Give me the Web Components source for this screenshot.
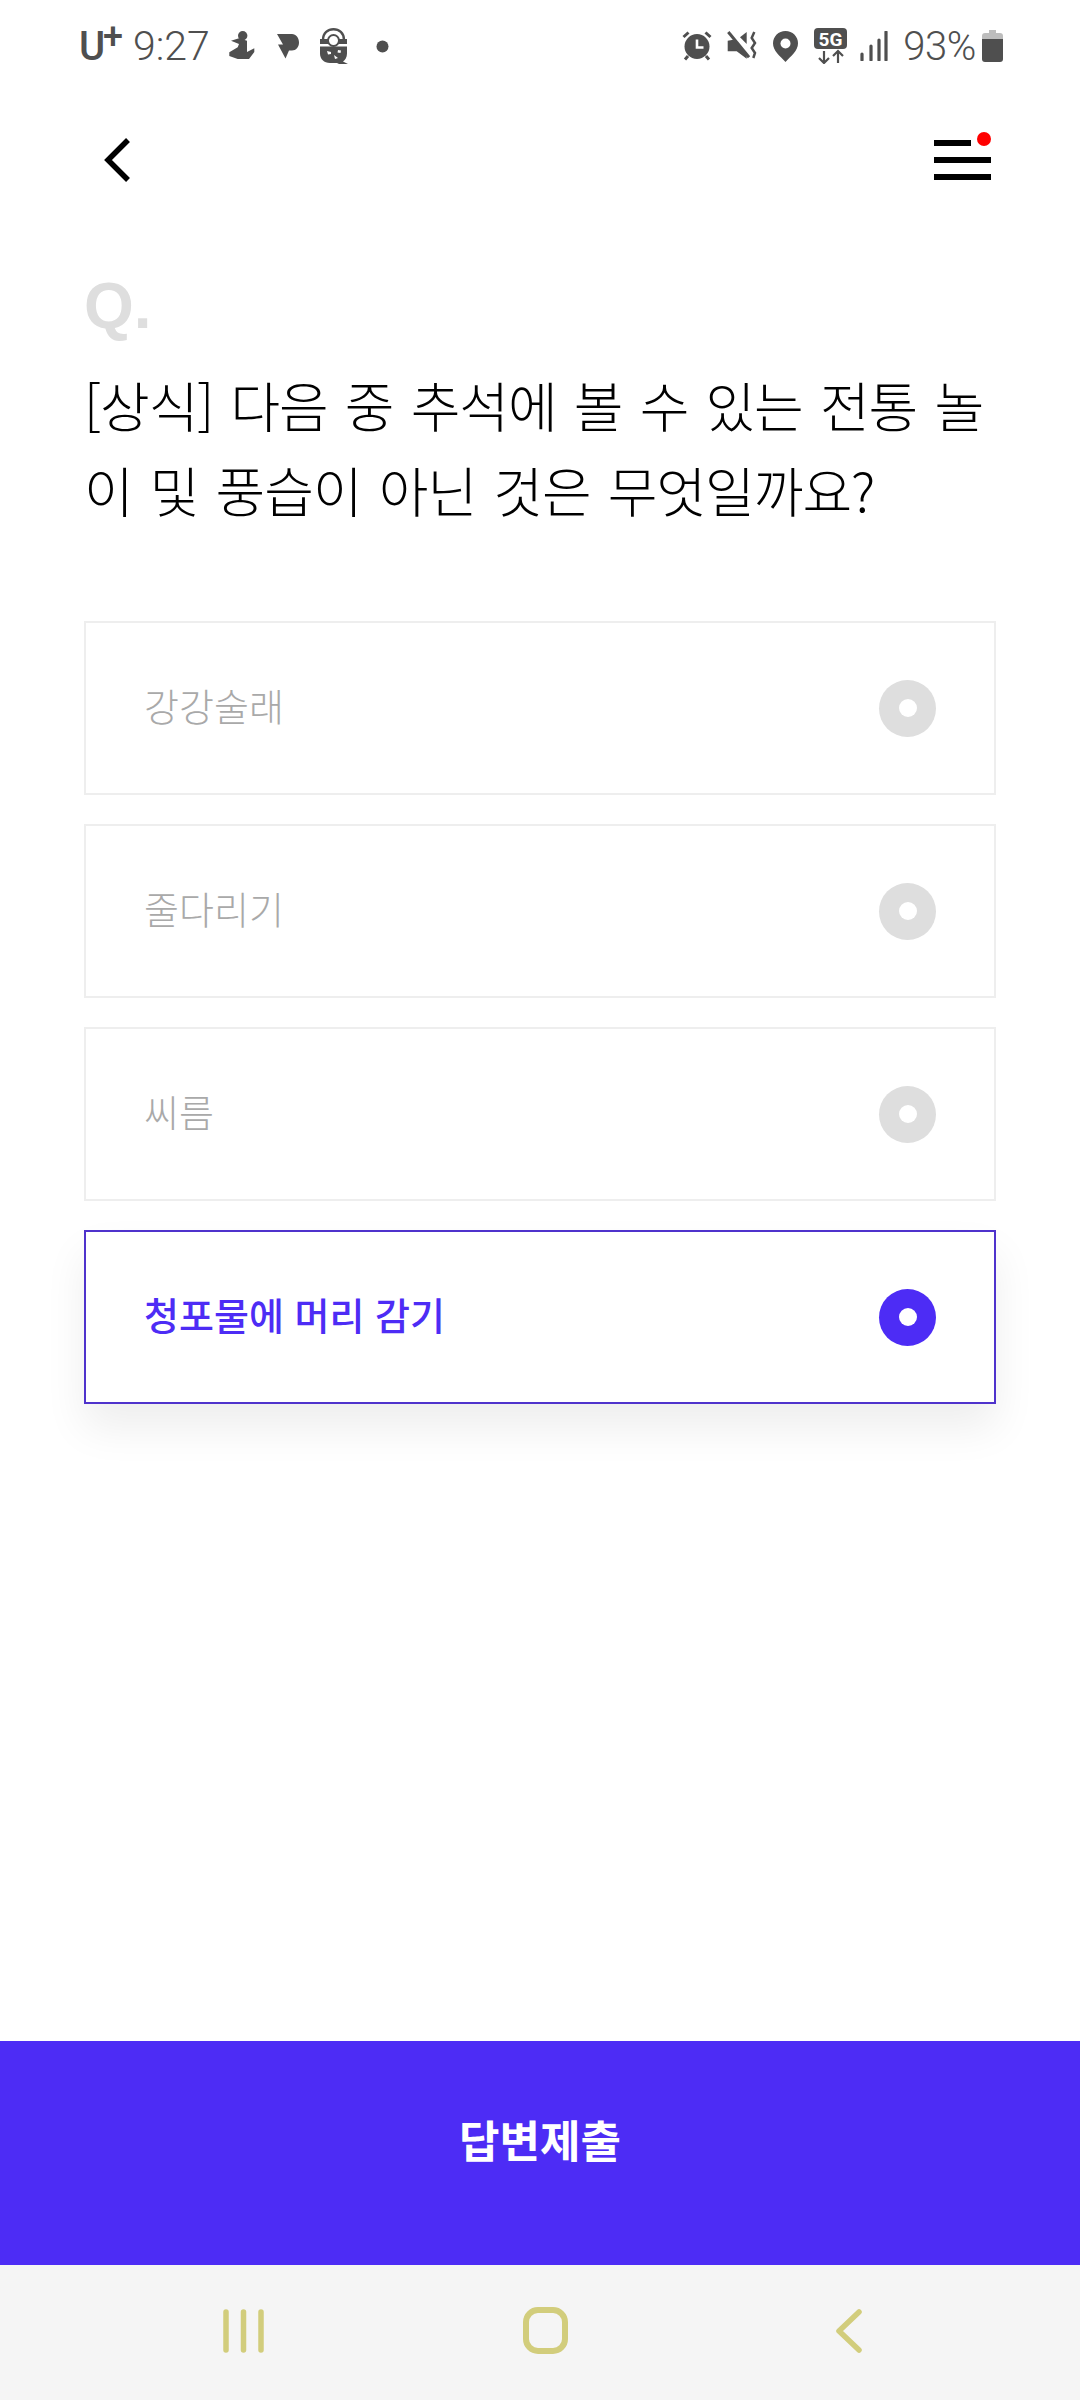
<!DOCTYPE html>
<html lang="ko">
<head>
<meta charset="utf-8">
<title>퀴즈</title>
<style>
  html, body { margin: 0; padding: 0; background: #fff; }
  body { font-family: "Noto Sans CJK KR", "Noto Sans", sans-serif; }
  quiz-app { width: 1080px; height: 2400px; }
</style>
</head>
<body>
<quiz-app>
  <status-bar slot="status"></status-bar>
  <top-bar slot="top"></top-bar>
  <quiz-question slot="question">[상식] 다음 중 추석에 볼 수 있는 전통 놀이 및 풍습이 아닌 것은 무엇일까요?</quiz-question>
  <answer-option slot="answers">강강술래</answer-option>
  <answer-option slot="answers">줄다리기</answer-option>
  <answer-option slot="answers">씨름</answer-option>
  <answer-option slot="answers" selected>청포물에 머리 감기</answer-option>
  <submit-button slot="submit">답변제출</submit-button>
  <nav-bar slot="nav"></nav-bar>
</quiz-app>

<script>
class QuizApp extends HTMLElement {
  constructor() {
    super();
    this.attachShadow({ mode: 'open' });
    this.shadowRoot.innerHTML = `
      <style>
        :host { display: flex; flex-direction: column; background: #fff; }
        .answers { display: flex; flex-direction: column; gap: 29px; padding: 0 84px; margin-top: 89px; }
        .spacer { flex: 1; }
      </style>
      <slot name="status"></slot>
      <slot name="top"></slot>
      <slot name="question"></slot>
      <div class="answers"><slot name="answers"></slot></div>
      <div class="spacer"></div>
      <slot name="submit"></slot>
      <slot name="nav"></slot>`;
  }
}

class StatusBar extends HTMLElement {
  constructor() {
    super();
    this.attachShadow({ mode: 'open' });
    this.shadowRoot.innerHTML = `
      <style>
        :host { display: flex; align-items: center; box-sizing: border-box; height: 90px; padding: 2px 77px 0 79px; color: #4f4f4f; font-family: Roboto, "Liberation Sans", sans-serif; }
        svg { display: block; flex: none; fill: #4f4f4f; }
        .carrier { font-size: 40px; font-weight: 500; line-height: 1; position: relative; width: 41px; margin-top: 2px; }
        .carrier i { position: absolute; left: 24px; top: -8px; font-style: normal; font-size: 36px; }
        .time { font-size: 41px; font-weight: 300; margin-left: 13px; }
        .pct { font-size: 40px; font-weight: 300; margin-left: 15px; letter-spacing: -.4px; }
        .gap { flex: 1; }
      </style>
      <span class="carrier">U<i>+</i></span>
      <span class="time">9:27</span>
      <svg style="margin-left:19px" width="26" height="30" viewBox="0 0 26 30">
        <circle cx="13.700" cy="4.700" r="4.700"/>
        <path d="M2 9.700L10 7.300l8 2.400V21l7.300-3.700V21L20 28H8.700L.3 25v-3.700L8.700 16.300 10 13z"/>
      </svg>
      <svg style="margin-left:22px" width="22" height="25" viewBox="0 0 22 25">
        <path d="M0 0H15C19 0 22 4 22 8.500S19 16.500 15 16.500H12L8.500 24.500 1 10.500H6L0 0z"/>
      </svg>
      <svg style="margin-left:20px" width="29" height="36" viewBox="0 0 29 36">
        <path d="M4 12C4 5 9 1.200 14.500 1.200S25 5 25 12" fill="none" stroke="#4f4f4f" stroke-width="2.400"/>
        <path d="M1 11h27v5H1z"/>
        <circle cx="14.500" cy="12.500" r="5.500" fill="#fff" stroke="#4f4f4f" stroke-width="2"/>
        <path d="M1 18.500h27v7c0 4-2 6.500-4 8l5 2.500h-9l-2-1h-7C5 35 1 31 1 25.500z"/>
        <path d="M8 23l4 1v2l-3 .5zM19 22l3 .5-.5 2.500-3-.5zM15 27l4 3-3 1z" fill="#fff"/>
      </svg>
      <svg style="margin-left:28px" width="13" height="13" viewBox="0 0 13 13"><circle cx="6.500" cy="6.500" r="6"/></svg>
      <div class="gap"></div>
      <svg width="30" height="30" viewBox="0 0 30 30">
        <circle cx="15" cy="15.500" r="12.500"/>
        <path d="M15 8.500v8h6.500" fill="none" stroke="#fff" stroke-width="2.600"/>
        <path d="M1.500 6l5-4.500M28.500 6l-5-4.500M6 25l-3 3.500M24 25l3 3.500" stroke="#4f4f4f" stroke-width="3" fill="none"/>
      </svg>
      <svg style="margin-left:15px" width="31" height="30" viewBox="0 0 31 30">
        <path d="M13 6.300L19.700 1V13z"/>
        <path d="M.7 9.700L6.300 8.700 19.700 22v5.700L9.700 20.300H.7z"/>
        <path d="M1.300 1L22 26.300" stroke="#4f4f4f" stroke-width="3"/>
        <path d="M27.300 1L24.700 7 28 12 24.700 17 28 22 26.300 27" fill="none" stroke="#4f4f4f" stroke-width="2.500"/>
      </svg>
      <svg style="margin-left:15px" width="25" height="31" viewBox="0 0 25 31">
        <path d="M12.500 0C5.500 0 0 5.500 0 12.300 0 20 7 25 12.500 31 18 25 25 20 25 12.300 25 5.500 19.500 0 12.500 0z"/>
        <circle cx="12.500" cy="12.500" r="5" fill="#fff"/>
      </svg>
      <svg style="margin-left:16px" width="34" height="36" viewBox="0 0 34 36">
        <rect x="0" y="0" width="33" height="21" rx="4"/>
        <text x="16.500" y="18" text-anchor="middle" font-family="Roboto, 'Liberation Sans', sans-serif" font-weight="700" font-size="19" fill="#fff">5G</text>
        <path d="M10 23v12M5 30l5 5 5-5M24 35V23M19 28l5-5 5 5" fill="none" stroke="#4f4f4f" stroke-width="2.200"/>
      </svg>
      <svg style="margin-left:12px" width="28" height="30" viewBox="0 0 28 30">
        <path d="M2 23v6M11 15v14M19 9v20M26 1v28" stroke="#4f4f4f" stroke-width="3.200" stroke-linecap="round" fill="none"/>
      </svg>
      <span class="pct">93%</span>
      <svg style="margin-left:6px" width="21" height="32" viewBox="0 0 21 32">
        <path d="M7 0h7v3h4c2 0 3 1 3 3v3H0V6c0-2 1-3 3-3h4z" fill="#bdbdbd"/>
        <path d="M0 9h21v20c0 2-1 3-3 3H3c-2 0-3-1-3-3z"/>
      </svg>`;
  }
}

class TopBar extends HTMLElement {
  constructor() {
    super();
    this.attachShadow({ mode: 'open' });
    this.shadowRoot.innerHTML = `
      <style>
        :host { display: flex; justify-content: space-between; align-items: center; box-sizing: border-box; height: 115px; padding: 16px 89px 0 104px; }
        svg { display: block; }
      </style>
      <svg style="margin-top:9px" width="26" height="44" viewBox="0 0 26 44">
        <path d="M24 2L4 22l20 20" fill="none" stroke="#000" stroke-width="5.500"/>
      </svg>
      <svg width="57" height="48" viewBox="0 0 57 48">
        <rect x="0" y="8" width="37" height="6"/>
        <rect x="0" y="25" width="57" height="6"/>
        <rect x="0" y="42" width="57" height="6"/>
        <circle cx="50" cy="7" r="7" fill="#f00"/>
      </svg>`;
  }
}

class QuizQuestion extends HTMLElement {
  constructor() {
    super();
    this.attachShadow({ mode: 'open' });
    this.shadowRoot.innerHTML = `
      <style>
        :host { display: block; padding: 0 84px; margin-top: 64px; }
        .q { font-family: "Liberation Sans", Arial, sans-serif; font-weight: 700; font-size: 64px; line-height: 75px; color: #dedede; }
        .text { margin-top: 18px; font-family: "Noto Sans CJK KR", sans-serif; font-weight: 300; font-size: 54px; line-height: 85px; color: #000; letter-spacing: -1px; word-spacing: 3px; }
      </style>
      <div class="q">Q.</div>
      <div class="text"><slot></slot></div>`;
  }
}

class AnswerOption extends HTMLElement {
  constructor() {
    super();
    this.attachShadow({ mode: 'open' });
    this.shadowRoot.innerHTML = `
      <style>
        :host { display: flex; align-items: center; justify-content: space-between; box-sizing: border-box; height: 174px; padding: 0 58px; background: #fff; border: 2px solid #eee; font-family: "Noto Sans CJK KR", sans-serif; font-weight: 300; font-size: 38px; color: #a9a9a9; }
        :host([selected]) { border-color: #4f33cc; color: #4d2cf5; font-weight: 500; box-shadow: 0 24px 40px rgba(0,0,0,.07); }
        .label { padding-bottom: 7px; }
        .dot { width: 57px; height: 57px; border-radius: 50%; background: #dedede; display: flex; align-items: center; justify-content: center; flex: none; }
        :host([selected]) .dot { background: #4d2cf5; }
        .dot::after { content: ""; width: 18px; height: 18px; border-radius: 50%; background: #fff; }
      </style>
      <span class="label"><slot></slot></span>
      <div class="dot"></div>`;
  }
}

class SubmitButton extends HTMLElement {
  constructor() {
    super();
    this.attachShadow({ mode: 'open' });
    this.shadowRoot.innerHTML = `
      <style>
        :host { display: flex; align-items: center; justify-content: center; box-sizing: border-box; height: 224px; padding-bottom: 28px; background: #4d2cf5; color: #fff; font-family: "Noto Sans CJK KR", sans-serif; font-weight: 700; font-size: 44px; }
      </style>
      <slot></slot>`;
  }
}

class NavBar extends HTMLElement {
  constructor() {
    super();
    this.attachShadow({ mode: 'open' });
    this.shadowRoot.innerHTML = `
      <style>
        :host { display: flex; align-items: center; height: 135px; padding: 0 0 4px 223px; background: #f5f5f5; box-sizing: border-box; }
        svg { display: block; flex: none; }
      </style>
      <svg width="41" height="44" viewBox="0 0 41 44">
        <path d="M3 3v38M20.500 3v38M38 3v38" stroke="#d2cd7c" stroke-width="5.500" stroke-linecap="round"/>
      </svg>
      <svg style="margin-left:259px" width="45" height="47" viewBox="0 0 45 47">
        <rect x="3" y="3" width="39" height="41" rx="12" fill="none" stroke="#d2cd7c" stroke-width="6"/>
      </svg>
      <svg style="margin-left:268px" width="26" height="44" viewBox="0 0 26 44">
        <path d="M23 3L3 22l20 19" fill="none" stroke="#d2cd7c" stroke-width="5.500" stroke-linecap="round" stroke-linejoin="round"/>
      </svg>`;
  }
}

customElements.define('quiz-app', QuizApp);
customElements.define('status-bar', StatusBar);
customElements.define('top-bar', TopBar);
customElements.define('quiz-question', QuizQuestion);
customElements.define('answer-option', AnswerOption);
customElements.define('submit-button', SubmitButton);
customElements.define('nav-bar', NavBar);
</script>
</body>
</html>
